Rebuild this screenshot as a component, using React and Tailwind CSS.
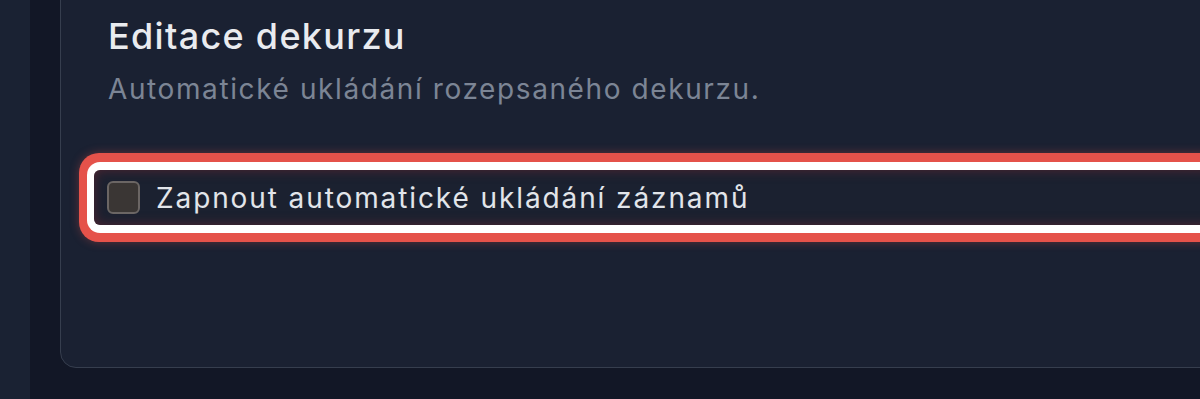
import React from 'react';

export default function App() {
  return (
    <div
      className="flex h-[399px] w-[1200px] overflow-hidden bg-[#121726]"
      style={{ fontFamily: 'Inter, "Noto Sans", sans-serif' }}
    >
      {/* left rail */}
      <div className="w-[30px] shrink-0 bg-[#1a2233]" />

      <div className="flex-1 pl-[30px] pb-[31px]">
        {/* settings card, top edge is above the view */}
        <div className="-mt-[20px] h-[388px] w-[1200px] rounded-b-[16px] border border-[#363e4e] bg-[#1a2132] pl-[47px] pt-[33px]">
          <h2 className="text-[36px] font-medium leading-[44px] tracking-[1.3px] text-[#e9ebef]">
            Editace dekurzu
          </h2>
          <p className="mt-[13px] text-[28px] leading-[36px] tracking-[1.6px] text-[#7c8595]">
            Automatické ukládání rozepsaného dekurzu.
          </p>

          {/* highlighted option */}
          <div className="-ml-[29px] mt-[46px] rounded-[20px] bg-[#e5524a] px-[8px] py-[9px] shadow-[0_0_10px_rgba(229,82,74,0.35)]">
            <div className="rounded-[13px] bg-white px-[7px] py-[8px]">
              <label className="flex h-[55px] items-center gap-[16px] rounded-[6px] bg-[#1b2130] pl-[13px] shadow-[inset_0_0_12px_rgba(120,40,50,0.6)]">
                <span className="h-[33px] w-[33px] shrink-0 rounded-[6px] border-2 border-[#6b6664] bg-[#3a3634]" />
                <span className="text-[28px] leading-[36px] tracking-[1.9px] text-[#e2e5ea]">
                  Zapnout automatické ukládání záznamů
                </span>
              </label>
            </div>
          </div>
        </div>
      </div>
    </div>
  );
}
